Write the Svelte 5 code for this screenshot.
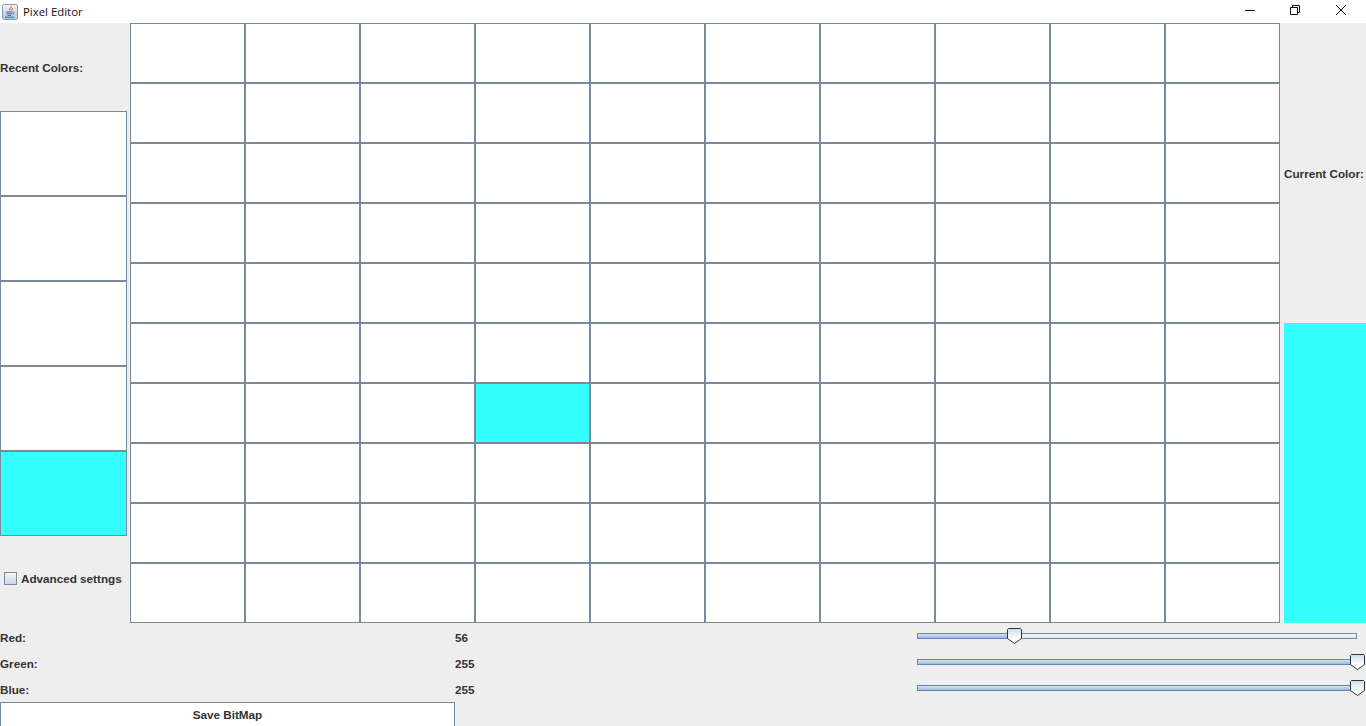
<script>
  const CYAN = '#33ffff';
  const WHITE = '#ffffff';

  let current = $state({ red: 56, green: 255, blue: 255 });
  let advanced = $state(false);

  const recent = [WHITE, WHITE, WHITE, WHITE, CYAN];

  // 10 x 10 canvas, one pixel painted
  const pixels = Array.from({ length: 100 }, (_, i) => (i === 63 ? CYAN : WHITE));

  const channels = [
    { key: 'red', label: 'Red:' },
    { key: 'green', label: 'Green:' },
    { key: 'blue', label: 'Blue:' }
  ];

  const TRACK_RANGE = 439.5;

  function thumbLeft(value) {
    return Math.round((value / 255) * TRACK_RANGE - 7.5);
  }
</script>

<div class="window">
  <header class="titlebar">
    <svg class="app-icon" width="16" height="16" viewBox="0 0 16 16">
      <defs>
        <linearGradient id="iconbg" x1="0" y1="0" x2="0" y2="1">
          <stop offset="0" stop-color="#f2f6fa" />
          <stop offset="1" stop-color="#a9c4de" />
        </linearGradient>
      </defs>
      <rect x="0.5" y="0.5" width="15" height="15" rx="2" fill="url(#iconbg)" stroke="#7f9ab5" />
      <path d="M9 2c1.300 1.500-2.500 2.500-1 4.500M10.500 4c.6 1-1.300 1.300-.6 2.500" fill="none" stroke="#e8762c" stroke-width="1.300" />
      <path d="M4 8h6.500M4.500 9.800h5.500M5.500 11.500h3.500M3 13.200h9" fill="none" stroke="#3f6a96" stroke-width="1" />
      <path d="M10.800 8c2-.3 2 2-.6 2.200" fill="none" stroke="#3f6a96" stroke-width="0.900" />
    </svg>
    <span class="title">Pixel Editor</span>
    <div class="controls">
      <svg width="10" height="10" viewBox="0 0 10 10" class="min"><path d="M0 5.500h10" stroke="#111" fill="none" /></svg>
      <svg width="10" height="10" viewBox="0 0 10 10" class="restore">
        <path d="M.5 2.500h7v7h-7zM2.500 2.500v-2h7v7h-2" stroke="#111" fill="none" />
      </svg>
      <svg width="10" height="10" viewBox="0 0 10 10" class="close"><path d="M0 0l10 10M10 0L0 10" stroke="#111" fill="none" /></svg>
    </div>
  </header>

  <main class="workspace">
    <aside class="left">
      <div class="recent-label">Recent Colors:</div>
      <div class="swatches">
        {#each recent as color}
          <div class="swatch" style:background={color}></div>
        {/each}
      </div>
      <label class="advanced">
        <input type="checkbox" bind:checked={advanced} />
        <span class="box"></span>
        Advanced settngs
      </label>
    </aside>

    <div class="grid">
      {#each pixels as color}
        <div class="pixel" style:background={color}></div>
      {/each}
    </div>

    <aside class="right">
      <div class="current-label">Current Color:</div>
      <div class="current" style:background={CYAN}></div>
    </aside>
  </main>

  <section class="bottom">
    {#each channels as ch}
      <div class="row-label">{ch.label}</div>
      <div class="row-value">{current[ch.key]}</div>
      <div class="slider">
        <div class="track">
          <div class="fill" style:width="{(current[ch.key] / 255) * 100}%"></div>
          <svg class="thumb" style:left="{thumbLeft(current[ch.key])}px" width="15" height="16" viewBox="0 0 15 16">
            <defs>
              <linearGradient id="thumb-{ch.key}" x1="0" y1="0" x2="0" y2="1">
                <stop offset="0" stop-color="#c9dcf0" />
                <stop offset="0.7" stop-color="#ffffff" />
              </linearGradient>
            </defs>
            <path d="M.5 1.500 1.500.5h12l1 1v9L7.500 15.500.5 10.500z" fill="url(#thumb-{ch.key})" stroke="#333" stroke-width="1" />
          </svg>
        </div>
      </div>
    {/each}
    <button class="save">Save BitMap</button>
  </section>
</div>

<style>
  :global(body) {
    margin: 0;
    background: #eeeeee;
  }

  .window {
    width: 1366px;
    height: 726px;
    display: flex;
    flex-direction: column;
    overflow: hidden;
    background: #eeeeee;
    color: #333333;
    font-family: "Liberation Sans", Arial, sans-serif;
    font-size: 11.7px;
    font-weight: bold;
  }

  .titlebar {
    height: 23px;
    flex-shrink: 0;
    display: flex;
    align-items: center;
    background: #ffffff;
    padding-left: 2px;
  }

  .app-icon {
    flex-shrink: 0;
  }

  .title {
    margin-left: 5px;
    font-family: "Open Sans", sans-serif;
    font-size: 11.4px;
    font-weight: normal;
    color: #111111;
  }

  .controls {
    margin-left: auto;
    display: flex;
    align-items: center;
    padding-right: 20px;
    gap: 35px;
    margin-top: -3px;
  }

  .controls svg {
    display: block;
  }

  .controls .close {
    margin-left: 1px;
  }

  .workspace {
    display: flex;
    height: 600px;
    flex-shrink: 0;
  }

  .left {
    width: 130px;
    flex-shrink: 0;
    display: flex;
    flex-direction: column;
  }

  .recent-label {
    height: 88px;
    display: flex;
    align-items: center;
    box-sizing: border-box;
  }

  .swatches {
    width: 127px;
    display: flex;
    flex-direction: column;
  }

  .swatch {
    box-sizing: border-box;
    height: 85px;
    border: 1px solid #7a8a99;
  }

  .advanced {
    display: flex;
    align-items: center;
    flex: 1;
    padding-left: 4px;
    padding-bottom: 2px;
  }

  .advanced input {
    display: none;
  }

  .box {
    width: 11px;
    height: 11px;
    margin-right: 4px;
    border: 1px solid #7a8a99;
    background: linear-gradient(#f4f7fb, #c6d6e8);
  }

  .grid {
    width: 1150px;
    flex-shrink: 0;
    display: grid;
    grid-template-columns: repeat(10, 115px);
    grid-template-rows: repeat(10, 60px);
  }

  .pixel {
    box-sizing: border-box;
    border: 1px solid #7a8a99;
  }

  .right {
    flex: 1;
    display: flex;
    flex-direction: column;
    padding-left: 4px;
  }

  .current-label {
    height: 300px;
    display: flex;
    align-items: center;
    flex-shrink: 0;
  }

  .current {
    flex: 1;
  }

  .bottom {
    flex: 1;
    display: grid;
    grid-template-columns: 455px 456px 455px;
    grid-template-rows: 26px 26px 26px 25px;
  }

  .row-label,
  .row-value {
    display: flex;
    align-items: center;
    padding-top: 3px;
    box-sizing: border-box;
  }

  .slider {
    padding: 10px 9px 0 6px;
    box-sizing: border-box;
  }

  .track {
    position: relative;
    box-sizing: border-box;
    height: 6px;
    border: 1px solid #7a8a99;
    background: linear-gradient(#f2f5f8, #dfe6ee);
  }

  .fill {
    position: absolute;
    left: -1px;
    top: -1px;
    bottom: -1px;
    box-sizing: border-box;
    border: 1px solid #6382bf;
    background: linear-gradient(#dbe6f3 0%, #b8cfe5 50%, #a3bcd6 100%);
  }

  .thumb {
    position: absolute;
    top: -6px;
    display: block;
  }

  .save {
    grid-column: 1;
    box-sizing: border-box;
    margin: 1px 0 0;
    padding: 0;
    border: 1px solid #7a8a99;
    border-bottom: none;
    background: #ffffff;
    color: #333333;
    font: inherit;
    height: 24px;
    cursor: pointer;
  }
</style>
